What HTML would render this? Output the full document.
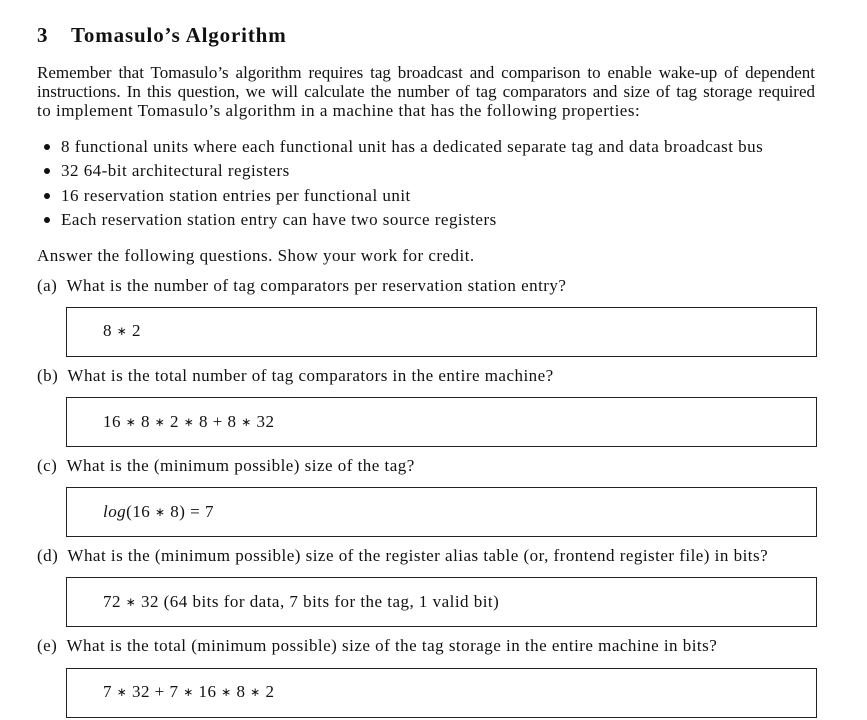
<!DOCTYPE html>
<html><head><meta charset="utf-8"><style>
body{margin:0;background:#fff;width:867px;height:720px;position:relative;overflow:hidden;font-family:"Liberation Serif",serif;font-size:17px;letter-spacing:0.48px;color:#111}
.l{position:absolute;line-height:20px;white-space:nowrap}
.j{position:absolute;line-height:20px;width:778px;left:37px;text-align:justify;text-align-last:justify;white-space:nowrap;letter-spacing:0}
.b{position:absolute;left:66px;width:749px;height:48px;border:1.3px solid #222}
.dot{position:absolute;left:44px;width:6px;height:6px;border-radius:50%;background:#111}
i{font-style:italic}
s{text-decoration:none;font-size:12px;position:relative;top:-1px}
</style></head><body>
<div class="l" style="left:37px;top:23px;font-size:21px;font-weight:bold;line-height:24px">3</div>
<div class="l" style="left:71px;top:23px;font-size:21px;font-weight:bold;line-height:24px;letter-spacing:0.85px">Tomasulo’s Algorithm</div>
<div class="j" style="top:63px">Remember that Tomasulo’s algorithm requires tag broadcast and comparison to enable wake-up of dependent</div>
<div class="j" style="top:82px">instructions. In this question, we will calculate the number of tag comparators and size of tag storage required</div>
<div class="j" style="top:101px;text-align-last:left;letter-spacing:0.5px">to implement Tomasulo’s algorithm in a machine that has the following properties:</div>
<div class="dot" style="top:144px"></div><div class="l" style="left:61px;top:137px">8 functional units where each functional unit has a dedicated separate tag and data broadcast bus</div>
<div class="dot" style="top:168px"></div><div class="l" style="left:61px;top:161px">32 64-bit architectural registers</div>
<div class="dot" style="top:193px"></div><div class="l" style="left:61px;top:186px">16 reservation station entries per functional unit</div>
<div class="dot" style="top:217px"></div><div class="l" style="left:61px;top:210px">Each reservation station entry can have two source registers</div>
<div class="l" style="left:37px;top:246px">Answer the following questions. Show your work for credit.</div>
<div class="l" style="left:37px;top:276px">(a)&nbsp; What is the number of tag comparators per reservation station entry?</div>
<div class="b" style="top:307px"></div><div class="l" style="left:103px;top:321px">8 <s>∗</s> 2</div>
<div class="l" style="left:37px;top:366px">(b)&nbsp; What is the total number of tag comparators in the entire machine?</div>
<div class="b" style="top:397px"></div><div class="l" style="left:103px;top:412px">16 <s>∗</s> 8 <s>∗</s> 2 <s>∗</s> 8 + 8 <s>∗</s> 32</div>
<div class="l" style="left:37px;top:456px">(c)&nbsp; What is the (minimum possible) size of the tag?</div>
<div class="b" style="top:487px"></div><div class="l" style="left:103px;top:502px"><i>log</i>(16 <s>∗</s> 8) = 7</div>
<div class="l" style="left:37px;top:546px">(d)&nbsp; What is the (minimum possible) size of the register alias table (or, frontend register file) in bits?</div>
<div class="b" style="top:577px"></div><div class="l" style="left:103px;top:592px">72 <s>∗</s> 32 (64 bits for data, 7 bits for the tag, 1 valid bit)</div>
<div class="l" style="left:37px;top:636px">(e)&nbsp; What is the total (minimum possible) size of the tag storage in the entire machine in bits?</div>
<div class="b" style="top:668px"></div><div class="l" style="left:103px;top:682px">7 <s>∗</s> 32 + 7 <s>∗</s> 16 <s>∗</s> 8 <s>∗</s> 2</div>
</body></html>
